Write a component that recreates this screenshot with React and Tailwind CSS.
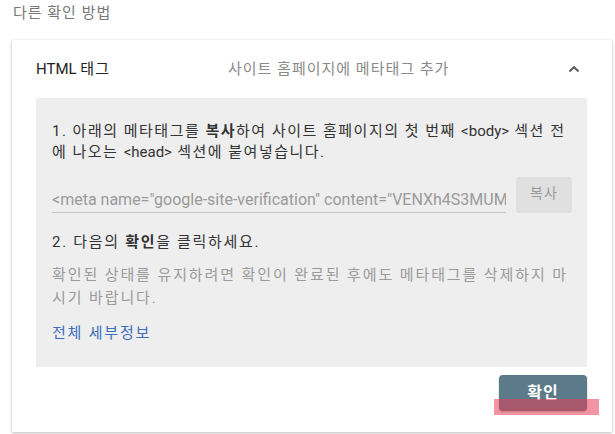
import React from 'react';

const font = { fontFamily: 'Roboto, "Noto Sans CJK KR", sans-serif' };

const Latin = ({ children }) => <span className="tracking-normal">{children}</span>;

const App = () => {
  return (
    <div className="w-[615px] h-[434px] bg-white overflow-hidden" style={font}>
      <div className="pl-[13px] pt-[3px] h-[40px] text-[15px] leading-[20px] tracking-[1px] text-[#777777]">
        다른 확인 방법
      </div>

      <div className="ml-[12px] w-[600px] bg-white shadow-[0_1px_3px_rgba(0,0,0,0.28)] pl-6 pr-[25px] pb-[21px]">
        {/* header */}
        <div className="h-[58px] flex items-center">
          <div className="w-[192px] text-[15px] text-[#222222]">
            HTML <span className="tracking-[1px]">태그</span>
          </div>
          <div className="flex-1 text-[15px] tracking-[1px] text-[#8a8a8a]">사이트 홈페이지에 메타태그 추가</div>
          <svg width="12" height="8" viewBox="0 0 12 8" className="mr-[7px]">
            <polyline points="1.5,6.5 6,2 10.5,6.5" fill="none" stroke="#555" strokeWidth="1.8" />
          </svg>
        </div>

        {/* gray box */}
        <div className="bg-[#eeeeee] pl-4 pr-3 pt-[23px] pb-[23px]">
          <p className="text-[15px] leading-[21px] tracking-[1.5px] text-[#333333]">
            1. 아래의 메타태그를 <b className="font-bold">복사</b>하여 사이트 홈페이지의 첫 번째 <Latin>&lt;body&gt;</Latin> 섹션 전에 나오는 <Latin>&lt;head&gt;</Latin> 섹션에 붙여넣습니다.
          </p>

          <div className="mt-[14px] flex items-center h-[36px]">
            <div className="w-[454px] h-[36px] flex items-end">
              <div className="w-full border-b border-[#c4c4c4] pb-[2px] text-[16px] leading-[20px] text-[#9a9a9a] whitespace-nowrap overflow-hidden">
                &lt;meta name="google-site-verification" content="VENXh4S3MUM
              </div>
            </div>
            <button className="ml-[10px] w-[56px] h-[36px] rounded-[3px] bg-[#e0e0e0] text-[14px] tracking-[1px] text-[#9a9a9a] pb-[4px]">
              복사
            </button>
          </div>

          <p className="mt-[19px] text-[15px] leading-[21px] tracking-[1.7px] text-[#333333]">
            2. 다음의 <b className="font-bold">확인</b>을 클릭하세요.
          </p>

          <p className="mt-[11px] text-[15px] leading-[23px] tracking-[1.9px] text-[#9a9a9a]">
            확인된 상태를 유지하려면 확인이 완료된 후에도 메타태그를 삭제하지 마시기 바랍니다.
          </p>

          <p className="mt-[13px] text-[15px] leading-[21px] tracking-[1.8px] text-[#3b6dc0]">전체 세부정보</p>
        </div>

        {/* footer */}
        <div className="mt-[8px] flex justify-end">
          <div className="relative">
            <button className="w-[88px] h-[36px] rounded-[4px] bg-[#5b7a8a] text-white text-[16px] font-bold tracking-[1px] shadow-[0_1px_2px_rgba(0,0,0,0.3)]">
              확인
            </button>
            <div className="absolute left-[-5px] top-[24px] w-[105px] h-[16px] bg-[#e83c55]/55" />
          </div>
        </div>
      </div>
    </div>
  );
};

export default App;
